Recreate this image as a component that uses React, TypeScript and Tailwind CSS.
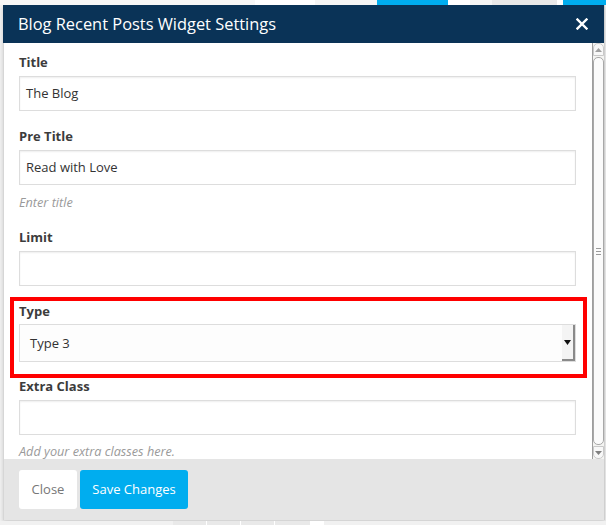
import React from "react";

const font = { fontFamily: '"Open Sans", "Noto Sans", sans-serif' };

function Label({ children }: { children: React.ReactNode }) {
  return (
    <div className="h-[18px] text-[13px] leading-[18px] font-bold text-[#3c3c3c]">{children}</div>
  );
}

function Input({ value }: { value?: string }) {
  return (
    <div className="mt-[5px] h-[35px] w-[557px] border border-[#dddddd] bg-white shadow-[inset_0_1px_2px_rgba(0,0,0,0.07)] flex items-center px-[6px] text-[13px] text-[#333]">
      {value}
    </div>
  );
}

function Help({ children }: { children: React.ReactNode }) {
  return <div className="h-[17px] text-[12.7px] leading-[17px] italic text-[#9a9a9a]">{children}</div>;
}

function Scrollbar() {
  return (
    <div className="w-[12px] h-full flex flex-col border-l border-[#9e9e9e] bg-[#f4f4f2]">
      <div className="h-[13px] flex items-center justify-center rounded-t-[5px] border border-[#c9c9c9] bg-[#f8f8f8]">
        <svg width="7" height="4" viewBox="0 0 7 4"><path d="M0 4 L3.5 0 L7 4 Z" fill="#a0a0a0" /></svg>
      </div>
      <div className="flex-1 mt-[1px] mb-[1px] rounded-[5px] border border-[#a8a8a8] bg-[#fbfbfb] flex items-center justify-center">
        <div className="flex flex-col gap-[2px]">
          <div className="w-[5px] h-px bg-[#9a9a9a]" />
          <div className="w-[5px] h-px bg-[#9a9a9a]" />
          <div className="w-[5px] h-px bg-[#9a9a9a]" />
        </div>
      </div>
      <div className="h-[13px] flex items-center justify-center rounded-b-[5px] border border-[#c9c9c9] bg-[#f8f8f8]">
        <svg width="7" height="4" viewBox="0 0 7 4"><path d="M0 0 L7 0 L3.5 4 Z" fill="#808080" /></svg>
      </div>
    </div>
  );
}

export default function App() {
  return (
    <div className="relative w-[606px] h-[525px] overflow-hidden bg-[#f1f1f1]" style={font}>
      {/* background strip at top */}
      <div className="flex h-[5px]">
        <div className="w-[255px] bg-[#f7f7f7]" />
        <div className="w-[60px] bg-[#ffffff]" />
        <div className="w-[62px] bg-[#f5f5f5]" />
        <div className="w-[71px] bg-[#00adef]" />
        <div className="w-[22px] bg-[#ffffff]" />
        <div className="w-[22px] bg-[#f4f4f4]" />
        <div className="w-[65px] bg-[#e8e8e8]" />
        <div className="w-[6px] bg-[#ffffff]" />
        <div className="flex-1 bg-[#00adef]" />
      </div>

      {/* modal */}
      <div className="ml-[3px] w-[602px] flex flex-col shadow-[0_2px_4px_rgba(0,0,0,0.15)] border-r border-[#cfcfcf]">
        <div className="h-[38px] bg-[#0a3357] flex items-center justify-between pl-[15px] pr-[16px]">
          <span className="text-[16.4px] text-white">Blog Recent Posts Widget Settings</span>
          <svg width="12" height="12" viewBox="0 0 12 12">
            <path d="M1.5 1.5 L10.5 10.5 M10.5 1.5 L1.5 10.5" stroke="white" strokeWidth="2.4" strokeLinecap="square" />
          </svg>
        </div>

        <div className="h-[416px] flex bg-white border-l border-[#d6d6d6] overflow-hidden">
          <div className="flex-1 pl-[15px] pt-[10px]">
            <Label>Title</Label>
            <Input value="The Blog" />
            <div className="h-[16px]" />
            <Label>Pre Title</Label>
            <Input value="Read with Love" />
            <div className="mt-[9px]">
              <Help>Enter title</Help>
            </div>
            <div className="h-[17px]" />
            <Label>Limit</Label>
            <Input />
            <div className="h-[16px]" />
            <Label>Type</Label>
            <div className="mt-[4px] h-[38px] w-[557px] border border-[#dddddd] bg-[#fdfdfd] flex items-center text-[13px] text-[#333]">
              <span className="flex-1 pl-[10px] pt-[1px]">Type 3</span>
              <div className="h-[36px] w-[13px] bg-[#f4f4f4] border-r-2 border-b-2 border-[#8a8a8a] flex items-center justify-center">
                <svg width="7" height="5" viewBox="0 0 7 5"><path d="M0 0 L7 0 L3.5 5 Z" fill="#111" /></svg>
              </div>
            </div>
            <div className="h-[15px]" />
            <Label>Extra Class</Label>
            <Input />
            <div className="mt-[8px]">
              <Help>Add your extra classes here.</Help>
            </div>
          </div>
          <Scrollbar />
        </div>

        <div className="h-[61px] bg-[#e5e5e5] border-l border-[#d6d6d6] flex items-start pt-[11px] pl-[15px] gap-[3px]">
          <div className="h-[39px] w-[58px] rounded-[3px] bg-white flex items-center justify-center text-[13px] text-[#777] pt-[1px]">
            Close
          </div>
          <div className="h-[39px] w-[108px] rounded-[3px] bg-[#00adef] flex items-center justify-center text-[13px] text-white pt-[1px]">
            Save Changes
          </div>
        </div>
      </div>

      {/* bottom background strip */}
      <div className="flex h-[5px] mt-[1px]">
        <div className="w-[173px] bg-[#f1f1f1]" />
        <div className="w-[34px] bg-[#e9e9e9] border-r border-white" />
        <div className="w-[34px] bg-[#e9e9e9] border-r border-white" />
        <div className="w-[34px] bg-[#e9e9e9] border-r border-white" />
        <div className="w-[35px] bg-[#e9e9e9]" />
        <div className="w-[14px] bg-[#ffffff]" />
        <div className="flex-1 bg-[#f1f1f1]" />
      </div>

      {/* red annotation box */}
      <div className="absolute left-[10px] top-[297px] w-[577px] h-[81px] border-4 border-[#ff0000]" />
    </div>
  );
}
